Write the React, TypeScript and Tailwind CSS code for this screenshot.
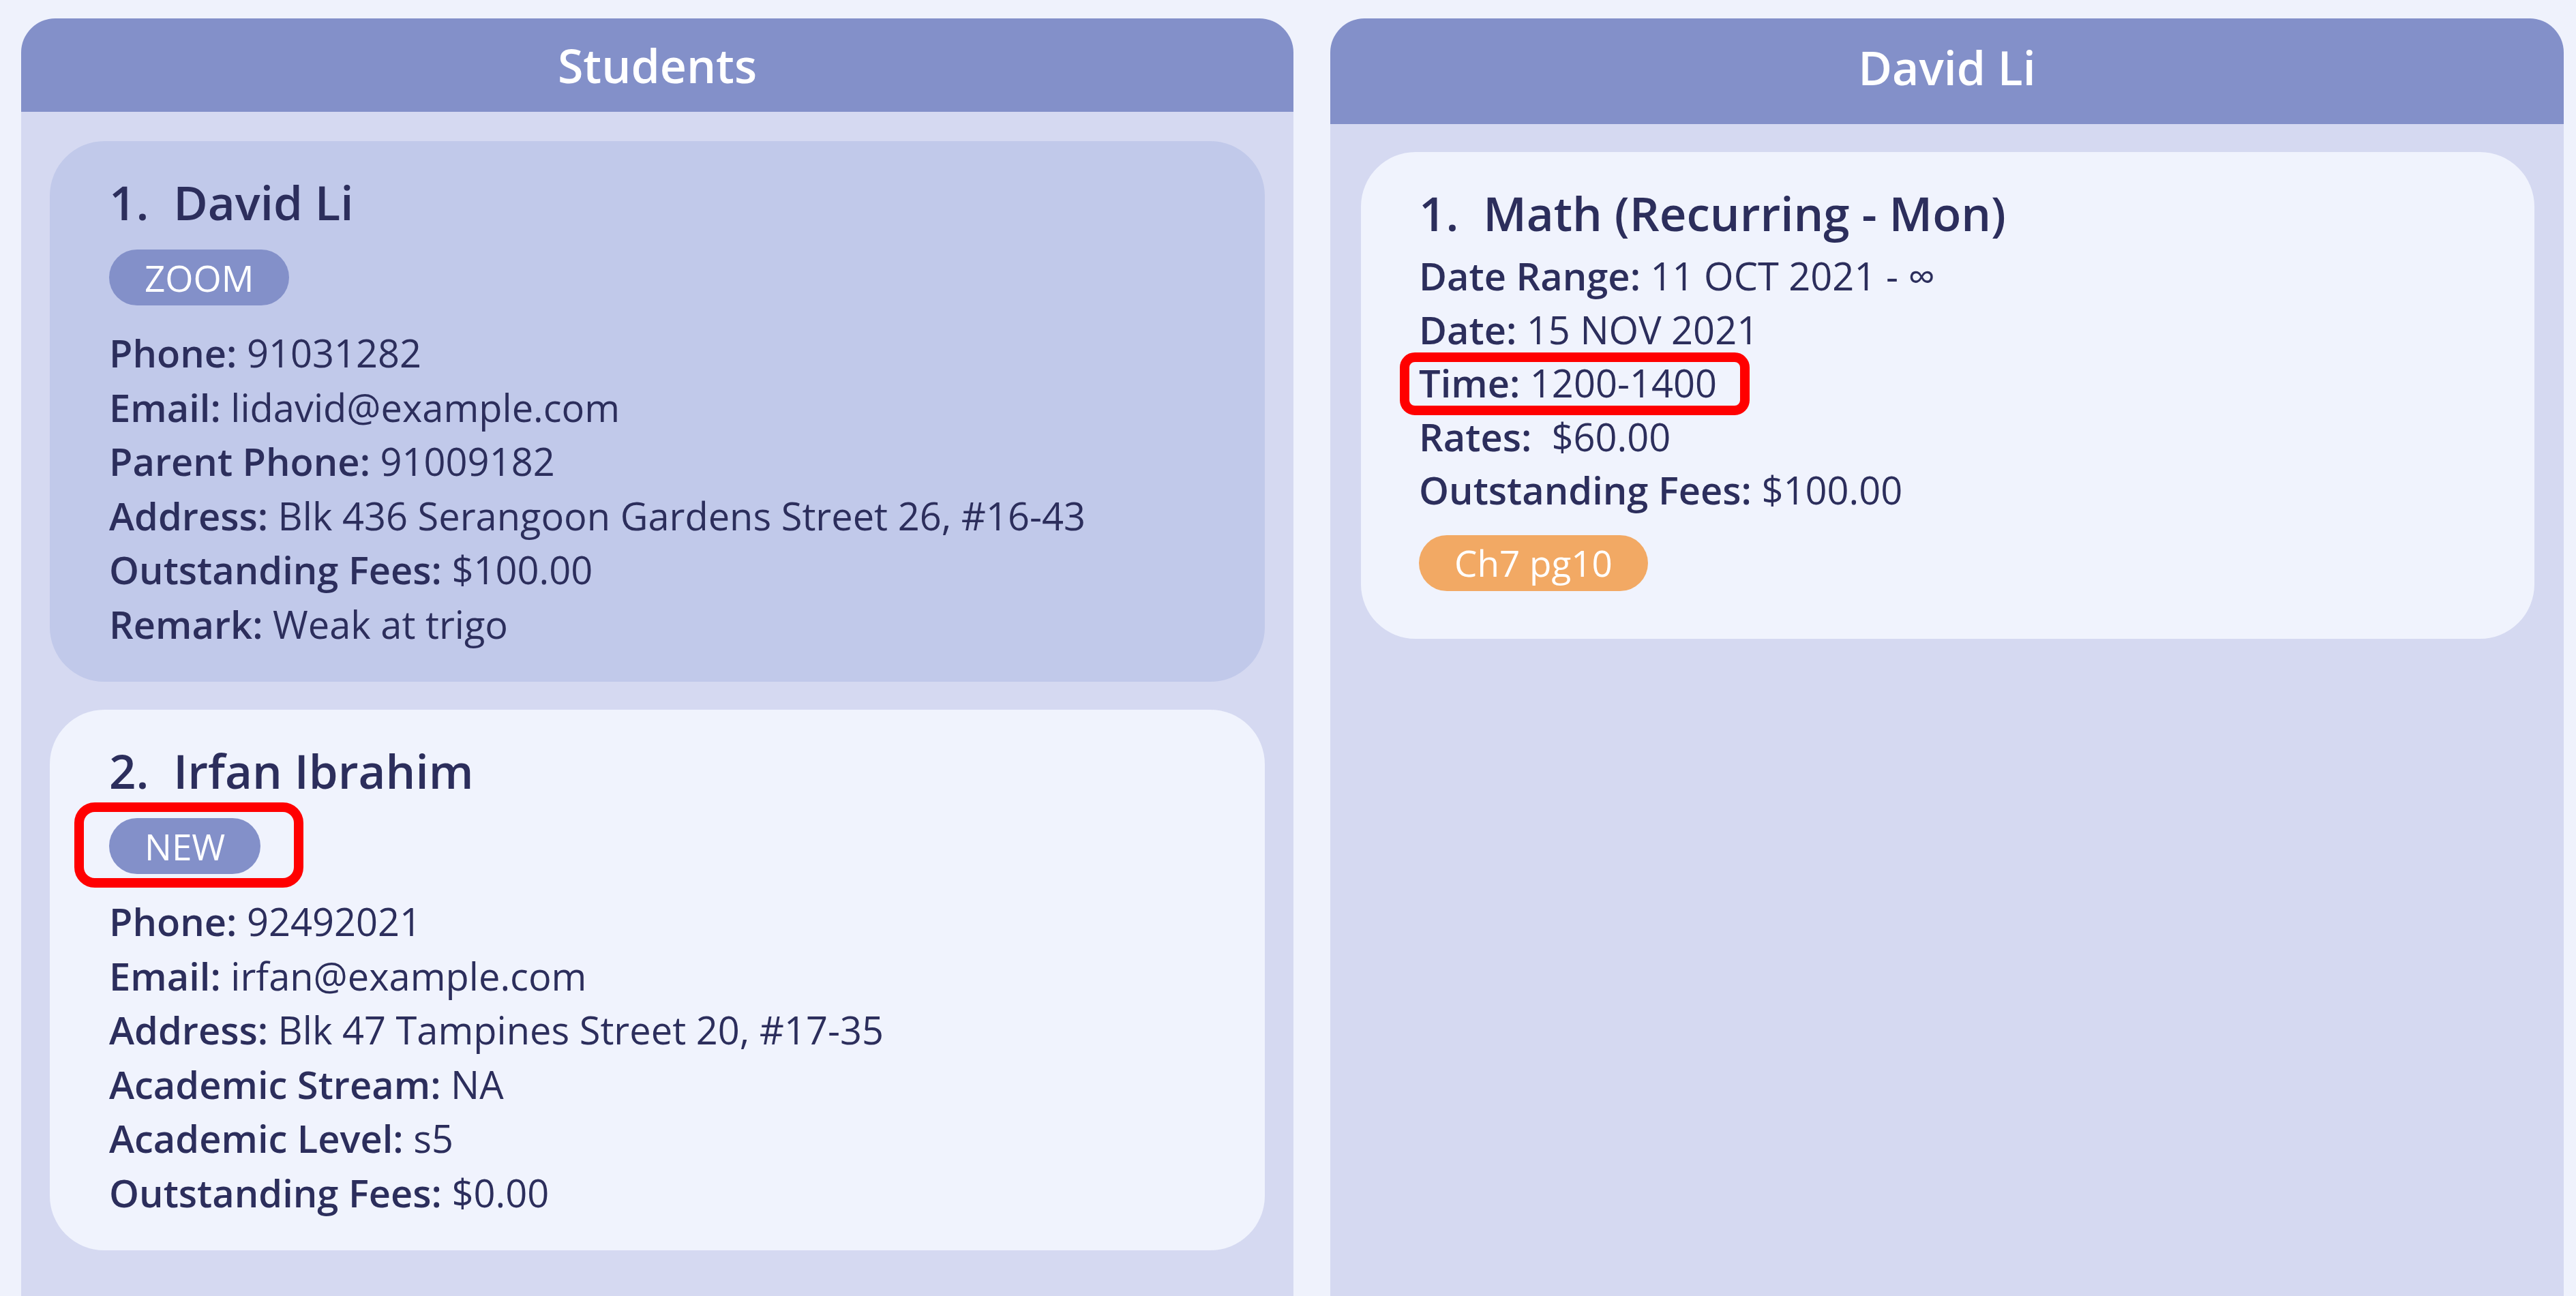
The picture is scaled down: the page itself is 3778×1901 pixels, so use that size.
import React from 'react';

type Field = { label: string; value: string; marked?: boolean };

interface StudentCardProps {
  index: number;
  name: string;
  tag: string;
  selected?: boolean;
  markTag?: boolean;
  fields: Field[];
}

const Tag: React.FC<{ text: string; orange?: boolean }> = ({ text, orange }) => (
  <span
    className={`inline-flex items-center h-[82px] px-[52px] rounded-full text-white text-[53px] leading-none ${
      orange ? 'bg-[#f2a964]' : 'bg-[#8390c9]'
    }`}
  >
    {text}
  </span>
);

const Row: React.FC<{ field: Field; leading: string }> = ({ field, leading }) => (
  <div className={`text-[56px] ${leading} whitespace-pre`}>
    <span className="relative inline-block">
      <span className="font-semibold">{field.label}:</span> {field.value}
      {field.marked && (
        <span className="absolute -left-[28px] -right-[48px] -top-[5px] -bottom-[8px] border-[14px] border-[#ff0000] rounded-[22px]" />
      )}
    </span>
  </div>
);

const StudentCard: React.FC<StudentCardProps> = ({ index, name, tag, selected, markTag, fields }) => (
  <div
    className={`rounded-[80px] pl-[87px] pt-[49px] pb-[45px] ${selected ? 'bg-[#c1c9ea]' : 'bg-[#f0f3fd]'}`}
  >
    <div className="text-[69px] leading-[80px] font-semibold whitespace-pre">
      {index}.  {name}
    </div>
    <div className="mt-[30px] mb-[30px] flex">
      <span className="relative inline-flex">
        <Tag text={tag} />
        {markTag && (
          <span className="absolute -left-[51px] -right-[63px] -top-[23px] -bottom-[20px] border-[14px] border-[#ff0000] rounded-[30px]" />
        )}
      </span>
    </div>
    {fields.map((f) => (
      <Row key={f.label} field={f} leading="leading-[79.5px]" />
    ))}
  </div>
);

const lessonFields: Field[] = [
  { label: 'Date Range', value: '11 OCT 2021 - ∞' },
  { label: 'Date', value: '15 NOV 2021' },
  { label: 'Time', value: '1200-1400', marked: true },
  { label: 'Rates', value: ' $60.00' },
  { label: 'Outstanding Fees', value: '$100.00' },
];

export default function App() {
  return (
    <div className="h-[1901px] overflow-hidden bg-[#eff2fc] font-['Open_Sans',sans-serif] text-[#2c2e5c] flex gap-[54px] pl-[31px] pr-[18px] pt-[27px]">
      <div className="w-[1866px] flex flex-col rounded-t-[50px] overflow-hidden">
        <div className="h-[137px] bg-[#8390c9] flex items-center justify-center text-white text-[68px] font-semibold">
          Students
        </div>
        <div className="flex-1 bg-[#d5d9f1] px-[42px] pt-[43px] flex flex-col gap-[41px]">
          <StudentCard
            index={1}
            name="David Li"
            tag="ZOOM"
            selected
            fields={[
              { label: 'Phone', value: '91031282' },
              { label: 'Email', value: 'lidavid@example.com' },
              { label: 'Parent Phone', value: '91009182' },
              { label: 'Address', value: 'Blk 436 Serangoon Gardens Street 26, #16-43' },
              { label: 'Outstanding Fees', value: '$100.00' },
              { label: 'Remark', value: 'Weak at trigo' },
            ]}
          />
          <StudentCard
            index={2}
            name="Irfan Ibrahim"
            tag="NEW"
            markTag
            fields={[
              { label: 'Phone', value: '92492021' },
              { label: 'Email', value: 'irfan@example.com' },
              { label: 'Address', value: 'Blk 47 Tampines Street 20, #17-35' },
              { label: 'Academic Stream', value: 'NA' },
              { label: 'Academic Level', value: 's5' },
              { label: 'Outstanding Fees', value: '$0.00' },
            ]}
          />
        </div>
      </div>

      <div className="flex-1 flex flex-col rounded-t-[50px] overflow-hidden">
        <div className="h-[155px] pb-[12px] bg-[#8390c9] flex items-center justify-center text-white text-[68px] font-semibold">
          David Li
        </div>
        <div className="flex-1 bg-[#d5d9f1] pl-[45px] pr-[43px] pt-[41px]">
          <div className="rounded-[80px] bg-[#f0f3fd] pl-[85px] pt-[49px] pb-[70px]">
            <div className="text-[69px] leading-[80px] font-semibold whitespace-pre">1.  Math (Recurring - Mon)</div>
            <div className="mt-[13px]">
              {lessonFields.map((f) => (
                <Row key={f.label} field={f} leading="leading-[78.5px]" />
              ))}
            </div>
            <div className="mt-[27px] flex">
              <Tag text="Ch7 pg10" orange />
            </div>
          </div>
        </div>
      </div>
    </div>
  );
}
